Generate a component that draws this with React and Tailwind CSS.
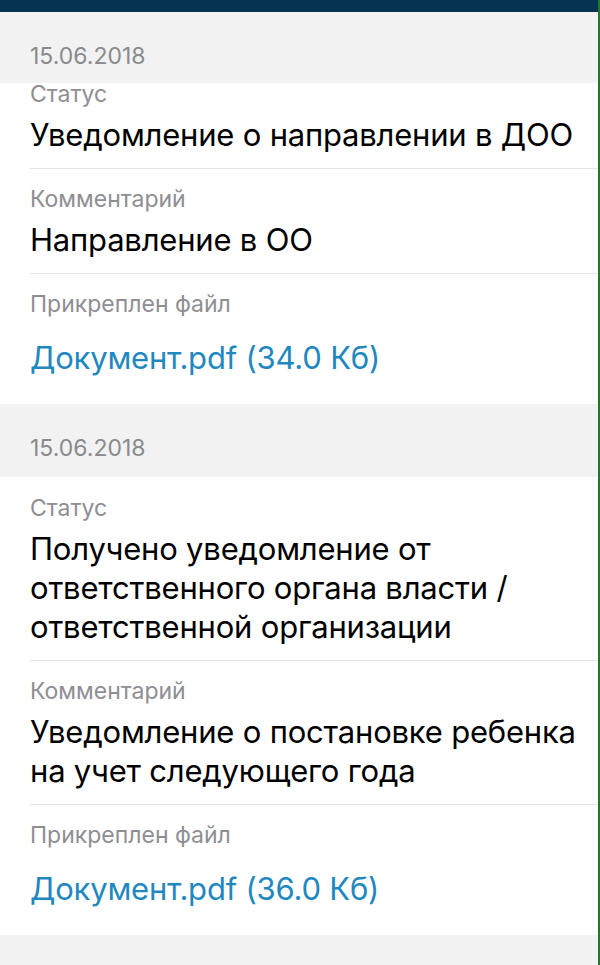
import React from 'react'

const entries = [
  {
    date: '15.06.2018',
    status: 'Уведомление о направлении в ДОО',
    comment: 'Направление в ОО',
    file: 'Документ.pdf (34.0 Кб)',
  },
  {
    date: '15.06.2018',
    status: 'Получено уведомление от\nответственного органа власти /\nответственной организации',
    comment: 'Уведомление о постановке ребенка\nна учет следующего года',
    file: 'Документ.pdf (36.0 Кб)',
  },
]

const Field = ({ label, value, top }) => (
  <div className={`ml-[30px] border-b border-[#e3e3e5] pb-[14px] ${top}`}>
    <p className="text-[23px] leading-[22px] text-[#8e8e93]">{label}</p>
    <p className="mt-[10px] whitespace-pre-line text-[31px] leading-[39px] tracking-[-0.2px] text-black">
      {value}
    </p>
  </div>
)

const App = () => {
  return (
    <main
      className="min-h-[965px] w-[600px] border-r-2 border-[#1d7a2c] bg-[#f2f2f3]"
      style={{ fontFamily: 'Inter, "Liberation Sans", sans-serif' }}
    >
      <div className="h-[12px] bg-[#06334f]" />

      {entries.map((entry, i) => (
        <section key={i}>
          <div className={`${i === 0 ? 'h-[71px]' : 'h-[73px]'} pt-[32px] pl-[30px]`}>
            <p className="text-[23px] leading-[24px] text-[#8a8a8e]">{entry.date}</p>
          </div>

          <div className="bg-white">
            <Field label="Статус" value={entry.status} top={i === 0 ? 'pt-0' : 'pt-[20px]'} />
            <Field label="Комментарий" value={entry.comment} top="pt-[19px]" />
            <div className="ml-[30px] pt-[19px] pb-[27px]">
              <p className="text-[23px] leading-[22px] text-[#8e8e93]">Прикреплен файл</p>
              <a className="mt-[23px] block text-[31px] leading-[39px] tracking-[-0.2px] text-[#1f88c0]">
                {entry.file}
              </a>
            </div>
          </div>
        </section>
      ))}
    </main>
  )
}

export default App
